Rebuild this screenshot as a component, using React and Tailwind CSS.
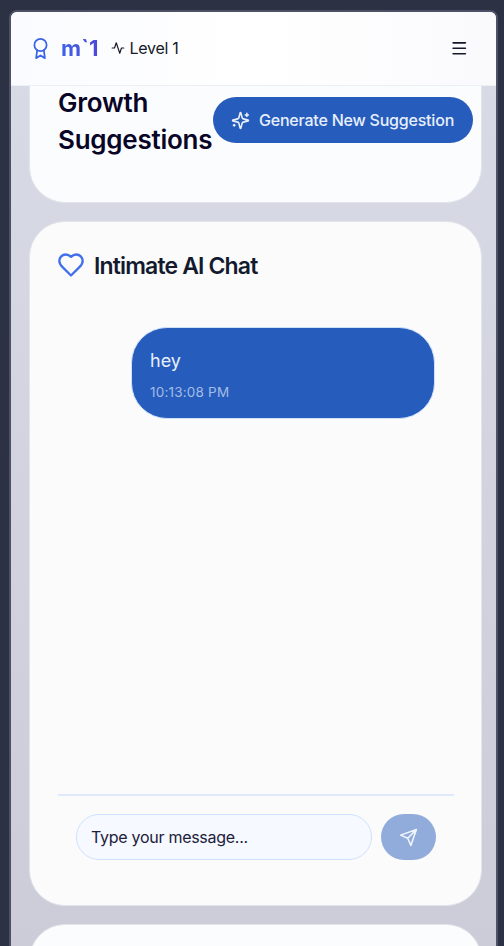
import { Menu } from "lucide-react";

function Icon({ className, children }) {
  return (
    <svg
      viewBox="0 0 24 24"
      fill="none"
      stroke="currentColor"
      strokeWidth="2"
      strokeLinecap="round"
      strokeLinejoin="round"
      className={className}
      aria-hidden="true"
    >
      {children}
    </svg>
  );
}

function Header() {
  return (
    <header className="flex h-[74px] shrink-0 items-center border-b border-[#eeeff3] bg-gradient-to-r from-[#fafbfe] via-white to-[#fafafd] pr-[28px] pl-[19px]">
      <Icon className="size-[21px] shrink-0 text-[#3b63e6]">
        <circle cx="12" cy="8" r="7" />
        <path d="M8.21 13.89 7 23l5-3 5 3-1.21-9.12" />
      </Icon>
      <span className="-mt-px ml-[10px] bg-gradient-to-r from-[#3b63e8] to-[#4f46d8] bg-clip-text text-[22px] leading-7 font-bold text-transparent">m`1</span>
      <Icon className="-mt-px ml-[12px] size-[14px] shrink-0 text-[#141827]">
        <path d="M22 12h-4l-3 9L9 3l-3 9H2" />
      </Icon>
      <span className="-mt-[2px] ml-[5px] text-[16px] leading-6 tracking-[-0.3px] text-[#141827]">Level 1</span>
      <button className="ml-auto" aria-label="Menu">
        <Menu className="size-[18.5px] text-[#141827]" strokeWidth={2} />
      </button>
    </header>
  );
}

function SuggestionsCard() {
  return (
    <section className="flex h-[117px] shrink-0 items-start rounded-b-[36px] border border-t-0 border-[#e3e5ec] bg-[#fbfcfe] pl-[28px]">
      <h2 className="w-[155px] shrink-0 text-[26px] leading-[37px] font-semibold tracking-[-0.25px] text-[#080526]">
        <span className="-mt-[2px] block">Growth</span>
        <span className="block">Suggestions</span>
      </h2>
      <button className="mt-[11px] flex h-[46px] w-[260px] shrink-0 items-center rounded-full bg-[#265dbc] pl-[18px] text-[16px] font-medium text-[#e8effc]">
        <Icon className="mr-[9px] size-[19px] shrink-0">
          <path d="M9.937 15.5A2 2 0 0 0 8.5 14.063l-6.135-1.582a.5.5 0 0 1 0-.962L8.5 9.936A2 2 0 0 0 9.937 8.5l1.582-6.135a.5.5 0 0 1 .963 0L14.063 8.5A2 2 0 0 0 15.5 9.937l6.135 1.581a.5.5 0 0 1 0 .964L15.5 14.063a2 2 0 0 0-1.437 1.437l-1.582 6.135a.5.5 0 0 1-.963 0z" />
          <path d="M20 3v4M22 5h-4M4 17v2M5 18H3" />
        </Icon>
        <span className="tracking-[-0.21px] whitespace-nowrap">Generate New Suggestion</span>
      </button>
    </section>
  );
}

function ChatCard() {
  return (
    <section className="mt-[18px] flex h-[685px] shrink-0 flex-col rounded-[36px] border border-[#e3e5ec] bg-[#fbfbfc] pr-[27px] pl-[28px]">
      <div className="mt-[30px] flex h-[28px] items-center">
        <Icon className="-mt-[2px] -ml-px size-[28px] shrink-0 text-[#4370ea]">
          <path d="M19 14c1.49-1.46 3-3.21 3-5.5A5.5 5.5 0 0 0 16.5 3c-1.76 0-3 .5-4.5 2-1.5-1.5-2.74-2-4.5-2A5.5 5.5 0 0 0 2 8.5c0 2.3 1.5 4.05 3 5.5l7 7Z" />
        </Icon>
        <h2 className="ml-[9px] text-[23px] leading-7 font-semibold tracking-[-0.85px] whitespace-nowrap text-[#141a2e]">Intimate AI Chat</h2>
      </div>
      <div className="mt-[47px] mr-[19px] h-[92px] w-[304px] self-end rounded-[36px] border border-[#cfe0fb] bg-[#265dbc] px-[18px] pt-[19px]">
        <p className="text-[18px] leading-[28px] text-[#e8effc]">hey</p>
        <p className="mt-[7px] text-[13.5px] leading-[20px] tracking-[0.2px] text-[#a3bce6]">10:13:08 PM</p>
      </div>
      <div className="mt-auto mb-[45px] flex gap-[9px] border-t-2 border-[#dfe9fc] px-[18px] pt-[18px]">
        <input
          className="h-[46px] w-[296px] shrink-0 rounded-full border border-[#cfe1fd] bg-[#f6f9ff] px-[14px] text-[16px] tracking-[-0.28px] text-[#20203a] outline-none placeholder:text-[#20203a]"
          placeholder="Type your message..."
        />
        <button className="flex h-[46px] w-[55px] shrink-0 items-center justify-center rounded-full bg-[#91abda] text-[#f0f5fd]" aria-label="Send">
          <Icon className="size-[19px]">
            <path d="m22 2-7 20-4-9-9-4ZM22 2 11 13" />
          </Icon>
        </button>
      </div>
    </section>
  );
}

export default function App() {
  return (
    <div className="h-[946px] w-[504px] overflow-hidden bg-[#2d3144] pt-[10px] pl-[9px] font-['Inter','Liberation_Sans',sans-serif]">
      <div className="flex h-[960px] w-[489px] flex-col overflow-hidden rounded-t-[8px] border-2 border-[#4c5166] bg-gradient-to-b from-[#d8dce6] via-[#d2d3df] to-[#cbccd7]">
        <Header />
        <main className="flex flex-col pr-[14px] pl-[18px]">
          <SuggestionsCard />
          <ChatCard />
          <section className="mt-[18px] h-[200px] shrink-0 rounded-[36px] border border-[#e3e5ec] bg-[#fbfcfd]" />
        </main>
      </div>
    </div>
  );
}
